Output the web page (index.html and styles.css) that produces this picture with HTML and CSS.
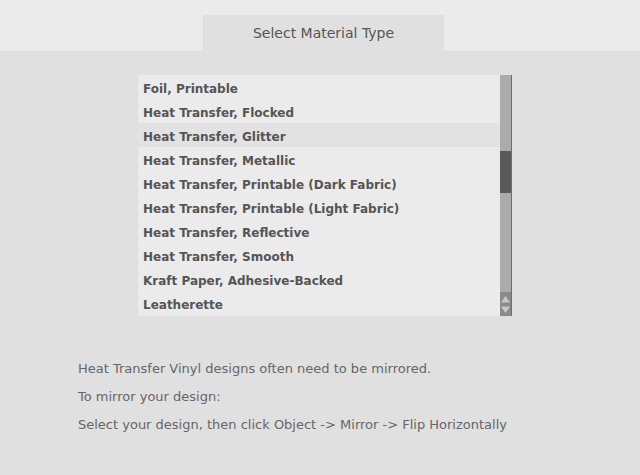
FILE: index.html
```html
<!DOCTYPE html>
<html>
<head>
<meta charset="utf-8">
<link rel="stylesheet" href="styles.css">
</head>
<body>
<div class="topbar">
  <div class="tab">Select Material Type</div>
</div>
<div class="main">
  <div class="listbox">
    <ul class="list">
      <li>Foil, Printable</li>
      <li>Heat Transfer, Flocked</li>
      <li class="sel">Heat Transfer, Glitter</li>
      <li>Heat Transfer, Metallic</li>
      <li>Heat Transfer, Printable (Dark Fabric)</li>
      <li>Heat Transfer, Printable (Light Fabric)</li>
      <li>Heat Transfer, Reflective</li>
      <li>Heat Transfer, Smooth</li>
      <li>Kraft Paper, Adhesive-Backed</li>
      <li>Leatherette</li>
    </ul>
    <div class="scrollbar">
      <div class="track">
        <div class="thumb"></div>
      </div>
      <div class="arrows">
        <svg width="11" height="23" viewBox="0 0 11 23">
          <path d="M5.5 3 L10 9.5 L1 9.5 Z" fill="#c8c8c8"/>
          <path d="M1 13.5 L10 13.5 L5.5 20 Z" fill="#c8c8c8"/>
        </svg>
      </div>
    </div>
  </div>
  <div class="info">
    <p>Heat Transfer Vinyl designs often need to be mirrored.</p>
    <p>To mirror your design:</p>
    <p>Select your design, then click Object -&gt; Mirror -&gt; Flip Horizontally</p>
  </div>
</div>
</body>
</html>
```
FILE: styles.css
```css
html, body {
  margin: 0;
  padding: 0;
  background: #e0e0e0;
  width: 640px;
  height: 475px;
  overflow: hidden;
  font-family: "DejaVu Sans", sans-serif;
}
.topbar {
  background: #ebebeb;
  height: 51px;
  display: flex;
  justify-content: center;
  align-items: flex-end;
}
.tab {
  margin-left: 7px;
  width: 241px;
  height: 36px;
  background: #e0e0e0;
  color: #555;
  font-size: 14px;
  display: flex;
  align-items: center;
  justify-content: center;
  padding-bottom: 1px;
  box-sizing: border-box;
}
.main {
  padding-top: 24px;
}
.listbox {
  margin-left: 138px;
  width: 374px;
  height: 241px;
  display: flex;
  background: #ebebeb;
}
.list {
  list-style: none;
  margin: 0;
  padding: 0;
  width: 362px;
}
.list li {
  height: 24px;
  line-height: 24px;
  padding-left: 5px;
  padding-top: 2px;
  box-sizing: border-box;
  font-size: 12px;
  font-weight: bold;
  color: #555;
  white-space: nowrap;
}
.list li.sel {
  background: #e2e2e2;
}
.scrollbar {
  width: 12px;
  display: flex;
  flex-direction: column;
  border-right: 1px solid #6e6e6e;
  box-sizing: border-box;
}
.track {
  flex: 1;
  background: #ababab;
  padding-top: 76px;
}
.thumb {
  height: 42px;
  background: #595959;
}
.arrows {
  height: 24px;
  background: #8a8a8a;
  display: flex;
  align-items: center;
}
.info {
  margin-left: 78px;
  margin-top: 39px;
  color: #666;
  font-size: 13px;
}
.info p {
  margin: 0;
  height: 28px;
  line-height: 28px;
}
```
